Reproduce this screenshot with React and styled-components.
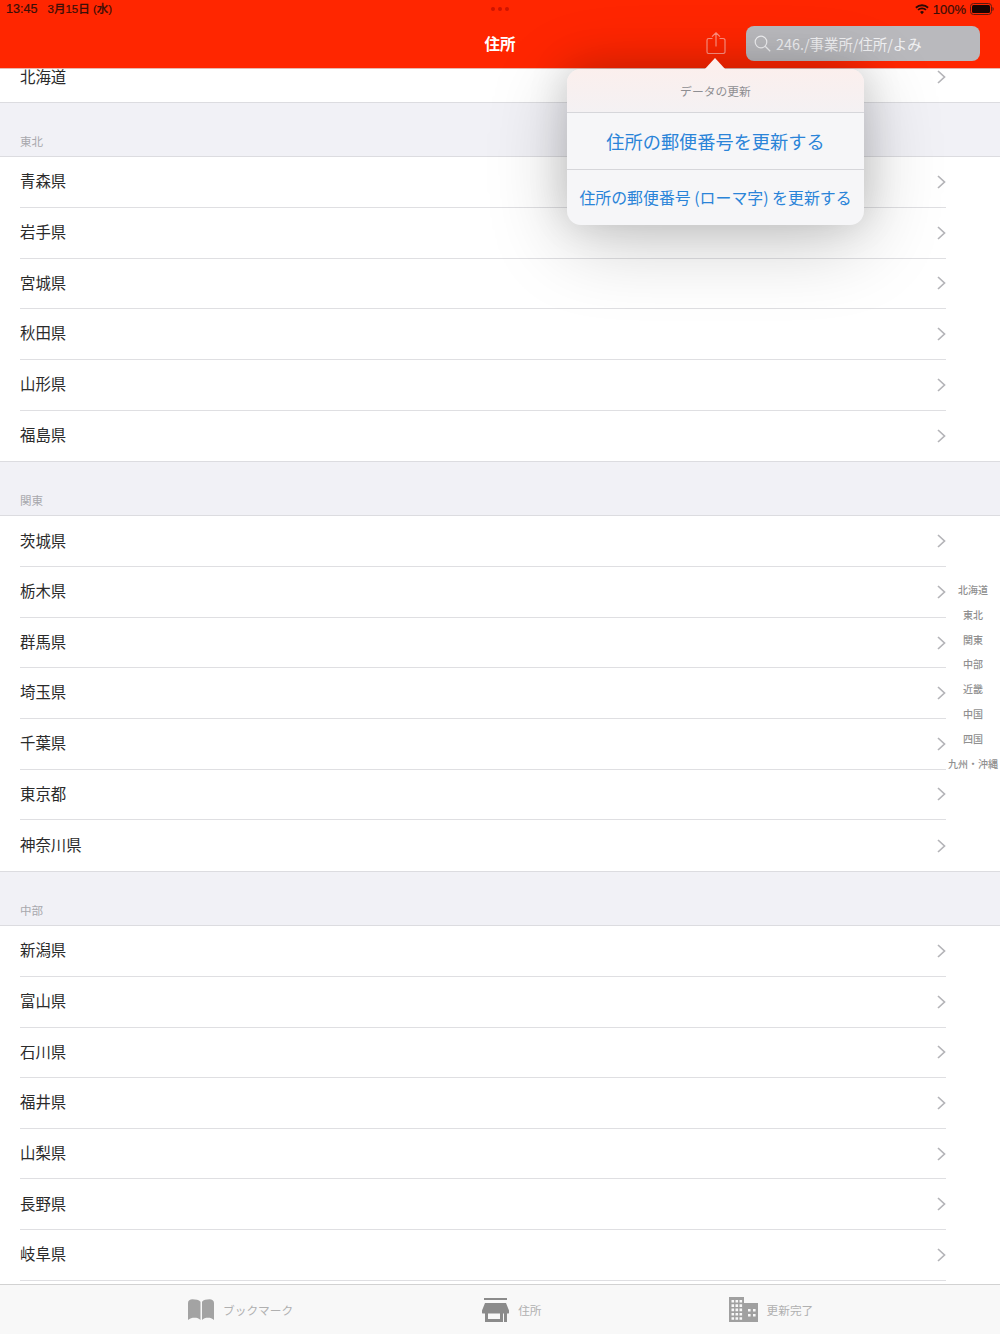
import React from "react";
import styled, { createGlobalStyle } from "styled-components";

const Global = createGlobalStyle`
  html, body { margin: 0; padding: 0; background: #fff; }
  body { font-family: "Noto Sans CJK JP", "Noto Sans", sans-serif; }
  * { box-sizing: border-box; }
`;

const Page = styled.div`
  position: relative;
  width: 1000px;
  height: 1334px;
  display: flex;
  flex-direction: column;
  overflow: hidden;
  background: #fff;
`;

const Header = styled.header`
  flex: none;
  height: 68px;
  background: #ff2600;
  box-shadow: 0 1px 0 #e8b8b0;
  display: flex;
  flex-direction: column;
`;

const StatusBar = styled.div`
  height: 18px;
  padding: 0 6px;
  display: grid;
  grid-template-columns: 1fr auto 1fr;
  align-items: center;
  font-family: "Liberation Sans", "Noto Sans CJK JP", sans-serif;
  font-size: 12.6px;
  color: #3a0f08;
`;

const StatusLeft = styled.div`
  display: flex;
  align-items: center;
  gap: 10px;
  white-space: nowrap;
  line-height: 18px;
  font-weight: 500;
  -webkit-text-stroke: 0.2px #3a0f08;
`;

const DateText = styled.span`
  font-size: 11.5px;
`;

const Dots = styled.div`
  display: flex;
  gap: 3px;
`;

const Dot = styled.span`
  width: 4px;
  height: 4px;
  border-radius: 50%;
  background: #cf1500;
`;

const StatusRight = styled.div`
  display: flex;
  justify-content: flex-end;
  align-items: center;
  gap: 4px;
  font-size: 13px;
  -webkit-text-stroke: 0.2px #3a0f08;
`;

const NavBar = styled.div`
  flex: 1;
  display: grid;
  grid-template-columns: 1fr auto 1fr;
  align-items: center;
  padding: 0 20px;
`;

const Title = styled.div`
  color: #fff;
  font-size: 15.5px;
  font-weight: 700;
`;

const NavRight = styled.div`
  display: flex;
  justify-content: flex-end;
  align-items: center;
  gap: 20px;
`;

const ShareIcon = styled.svg`
  width: 20px;
  height: 22px;
`;

const Search = styled.div`
  width: 234px;
  height: 35px;
  border-radius: 8px;
  background: #b9b9bd;
  display: flex;
  align-items: center;
  gap: 5px;
  padding-left: 8px;
  color: #f0f0f2;
  font-size: 14.4px;
`;

const List = styled.main`
  flex: 1;
  min-height: 0;
`;

const SectionHeader = styled.div`
  height: 55.3px;
  background: #f1f1f6;
  border-top: 1px solid #dcdce0;
  border-bottom: 1px solid #dcdce0;
  display: flex;
  align-items: flex-end;
  padding: 0 0 7px 20px;
  color: #a8a8ad;
  font-size: 11.5px;
  line-height: 16px;
`;

const Row = styled.div`
  height: 50.65px;
  margin-left: 20px;
  width: 926px;
  display: flex;
  align-items: center;
  justify-content: space-between;
  border-bottom: ${(p) => (p.$last ? "none" : "1px solid #dfdfe2")};
  color: #2b2b2b;
  font-size: 15.4px;
`;

const TopRow = styled(Row)`
  height: 34px;
  padding-bottom: 17px;
`;

const Label = styled.span`
  line-height: 1;
  margin-bottom: 2px;
`;

const TopLabel = styled.span`
  line-height: 1;
`;

const Chevron = styled.svg`
  width: 9px;
  height: 14px;
`;

const Index = styled.nav`
  position: absolute;
  right: 0;
  top: 578px;
  width: 54px;
  display: flex;
  flex-direction: column;
  align-items: center;
  color: #909090;
  font-size: 10px;
  font-weight: 500;
`;

const IndexItem = styled.div`
  height: 24.8px;
  line-height: 24.8px;
  white-space: nowrap;
`;

const TabBar = styled.footer`
  flex: none;
  height: 50px;
  background: #f8f8f8;
  border-top: 1px solid #d2d2d2;
  display: flex;
  gap: 188px;
  padding-left: 188px;
  align-items: center;
`;

const Tab = styled.div`
  display: flex;
  align-items: center;
  gap: 9px;
  color: #b0b0b0;
  font-size: 11.7px;
`;

const MiddleTab = styled(Tab)`
  margin: 0 -1px 0 1px;
`;

const Popover = styled.aside`
  position: absolute;
  left: 567px;
  top: 69px;
  width: 297px;
  height: 156px;
  border-radius: 14px;
  background: #f6f6f8;
  box-shadow: 0 16px 80px rgba(0, 0, 0, 0.22), 0 -4px 40px rgba(0, 0, 0, 0.14);
  display: flex;
  flex-direction: column;
  &::before {
    content: "";
    position: absolute;
    left: 137px;
    top: -11px;
    width: 0;
    height: 0;
    border-left: 11.5px solid transparent;
    border-right: 11.5px solid transparent;
    border-bottom: 12px solid #fcf0ee;
  }
`;

const PopHeader = styled.div`
  height: 44px;
  background: linear-gradient(#fbefed, #f4f1f3);
  border-radius: 14px 14px 0 0;
  display: flex;
  align-items: center;
  justify-content: center;
  color: #8e8e92;
  font-size: 11.8px;
  border-bottom: 1px solid #d6d6da;
`;

const PopAction = styled.div`
  height: ${(p) => p.$h}px;
  display: flex;
  align-items: center;
  justify-content: center;
  color: #2a84d8;
  font-size: ${(p) => p.$size}px;
  white-space: nowrap;
  border-bottom: ${(p) => (p.$divided ? "1px solid #d6d6da" : "none")};
`;

const sections = [
  { title: "東北", items: ["青森県", "岩手県", "宮城県", "秋田県", "山形県", "福島県"] },
  { title: "関東", items: ["茨城県", "栃木県", "群馬県", "埼玉県", "千葉県", "東京都", "神奈川県"] },
  { title: "中部", items: ["新潟県", "富山県", "石川県", "福井県", "山梨県", "長野県", "岐阜県"], open: true },
];

const index = ["北海道", "東北", "関東", "中部", "近畿", "中国", "四国", "九州・沖縄"];

const Arrow = () => (
  <Chevron viewBox="0 0 9 14">
    <path d="M1 1l6.5 6L1 13" fill="none" stroke="#b4b4b8" strokeWidth="1.7" />
  </Chevron>
);

const Pref = ({ name, last }) => (
  <Row $last={last}>
    <Label>{name}</Label>
    <Arrow />
  </Row>
);

const windows = [];
for (let r = 0; r < 5; r++) {
  for (let c = 0; c < 3; c++) {
    windows.push(`M${2.5 + c * 4} ${3 + r * 4.3}h2.6v2.6h-2.6z`);
  }
}
const wingWindows = "M19 12h2.6v2.6H19zM24 12h2.6v2.6H24zM19 17h2.6v2.6H19zM24 17h2.6v2.6H24z";

export default function App() {
  return (
    <Page>
      <Global />
      <Header>
        <StatusBar>
          <StatusLeft>
            <span>13:45</span>
            <DateText>3月15日 (水)</DateText>
          </StatusLeft>
          <Dots>
            <Dot />
            <Dot />
            <Dot />
          </Dots>
          <StatusRight>
            <svg width="14" height="11" viewBox="0 0 15 11">
              <path d="M7.5 10.500L5.400 8.200a3 3 0 0 1 4.200 0zM3.900 6.700L2.600 5.300a7 7 0 0 1 9.800 0l-1.300 1.400a5.200 5.200 0 0 0-7.200 0zM1.600 4.300L.3 2.900a10.400 10.400 0 0 1 14.400 0l-1.300 1.400a8.600 8.600 0 0 0-11.800 0z" fill="#2a0a05" />
            </svg>
            <span>100%</span>
            <svg width="24" height="12" viewBox="0 0 24 12">
              <rect x=".5" y=".5" width="21" height="11" rx="3" fill="none" stroke="#5a1a10" />
              <rect x="2" y="2" width="18" height="8" rx="1.5" fill="#1a0503" />
              <path d="M22.500 4v4c.8-.3 1.200-1 1.200-2s-.4-1.700-1.200-2z" fill="#5a1a10" />
            </svg>
          </StatusRight>
        </StatusBar>
        <NavBar>
          <span />
          <Title>住所</Title>
          <NavRight>
            <ShareIcon viewBox="0 0 20 22">
              <path d="M6.500 6.500H2.800A1.800 1.800 0 0 0 1 8.300v11.400a1.800 1.800 0 0 0 1.800 1.800h14.400a1.800 1.800 0 0 0 1.800-1.800V8.300a1.800 1.800 0 0 0-1.800-1.800h-3.700M10 14.500V1M6 4.600L10 .8l4 3.800" fill="none" stroke="#ff8f7f" strokeWidth="1.2" />
            </ShareIcon>
            <Search>
              <svg width="17" height="17" viewBox="0 0 17 17">
                <circle cx="7" cy="7" r="5.800" fill="none" stroke="#f0f0f2" strokeWidth="1.2" />
                <path d="M11.200 11.200l5 5" stroke="#f0f0f2" strokeWidth="1.3" />
              </svg>
              246./事業所/住所/よみ
            </Search>
          </NavRight>
        </NavBar>
      </Header>

      <List>
        <TopRow $last>
          <TopLabel>北海道</TopLabel>
          <Arrow />
        </TopRow>
        {sections.map((s) => (
          <section key={s.title}>
            <SectionHeader>{s.title}</SectionHeader>
            {s.items.map((name, i) => (
              <Pref key={name} name={name} last={!s.open && i === s.items.length - 1} />
            ))}
          </section>
        ))}
      </List>

      <TabBar>
        <Tab>
          <svg width="26" height="21" viewBox="0 0 26 21">
            <path d="M0 4C0 1.500 2 .3 4.500.3c3 0 6.600.8 8 2.400V21c-1.600-1.600-3.400-2.200-6-2.200-2.400 0-4.600.6-6.500 2.200zM26 4c0-2.500-2-3.700-4.500-3.700-3 0-6.100.8-7.500 2.400V21c1.600-1.600 3.400-2.200 6-2.200 2.400 0 4.100.6 6 2.200z" fill="#a3a3a3" />
          </svg>
          ブックマーク
        </Tab>
        <MiddleTab>
          <svg width="27" height="24" viewBox="0 0 27 24">
            <path d="M2 0h23v2H2zM3 5h21l3 7.500V15a.6.6 0 0 1-.5.5H25V24h-3v-8.500H6V21h12v-5.500h3V24H3v-8.500H.5A.6.6 0 0 1 0 15v-2.500z" fill="#8b8b8b" />
          </svg>
          住所
        </MiddleTab>
        <Tab>
          <svg width="29" height="25" viewBox="0 0 29 25">
            <path d={`M0 0h15v6h14v19H0z${windows.join("")}${wingWindows}`} fill="#a0a0a0" fillRule="evenodd" />
          </svg>
          更新完了
        </Tab>
      </TabBar>

      <Index>
        {index.map((t) => (
          <IndexItem key={t}>{t}</IndexItem>
        ))}
      </Index>

      <Popover>
        <PopHeader>データの更新</PopHeader>
        <PopAction $h={57} $size={18.2} $divided>
          住所の郵便番号を更新する
        </PopAction>
        <PopAction $h={55} $size={15.9}>
          住所の郵便番号 (ローマ字) を更新する
        </PopAction>
      </Popover>
    </Page>
  );
}
